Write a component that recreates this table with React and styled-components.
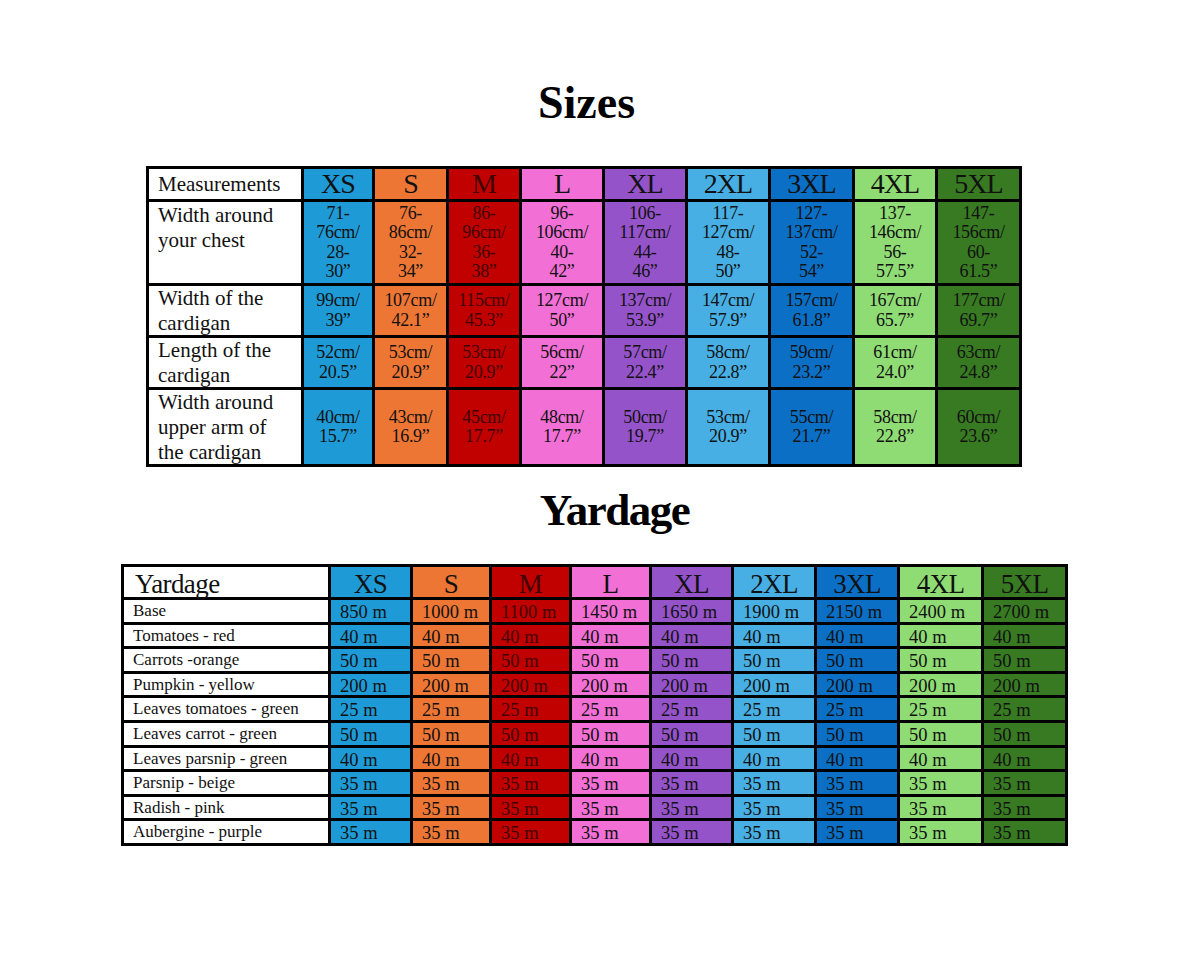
import React from "react";
import styled, { createGlobalStyle } from "styled-components";

const sizes = [
  { name: "XS", bg: "#1e9bd7", fg: "#111" },
  { name: "S", bg: "#ee7634", fg: "#111" },
  { name: "M", bg: "#c10000", fg: "#420000" },
  { name: "L", bg: "#f270d6", fg: "#111" },
  { name: "XL", bg: "#9553ca", fg: "#111" },
  { name: "2XL", bg: "#47afe4", fg: "#111" },
  { name: "3XL", bg: "#0b6fc5", fg: "#111" },
  { name: "4XL", bg: "#8fdb74", fg: "#111" },
  { name: "5XL", bg: "#377a22", fg: "#111" },
];

const measurements = [
  {
    label: "Width around\nyour chest",
    values: [
      "71-\n76cm/\n28-\n30”",
      "76-\n86cm/\n32-\n34”",
      "86-\n96cm/\n36-\n38”",
      "96-\n106cm/\n40-\n42”",
      "106-\n117cm/\n44-\n46”",
      "117-\n127cm/\n48-\n50”",
      "127-\n137cm/\n52-\n54”",
      "137-\n146cm/\n56-\n57.5”",
      "147-\n156cm/\n60-\n61.5”",
    ],
  },
  {
    label: "Width of the\ncardigan",
    values: [
      "99cm/\n39”",
      "107cm/\n42.1”",
      "115cm/\n45.3”",
      "127cm/\n50”",
      "137cm/\n53.9”",
      "147cm/\n57.9”",
      "157cm/\n61.8”",
      "167cm/\n65.7”",
      "177cm/\n69.7”",
    ],
  },
  {
    label: "Length of the\ncardigan",
    values: [
      "52cm/\n20.5”",
      "53cm/\n20.9”",
      "53cm/\n20.9”",
      "56cm/\n22”",
      "57cm/\n22.4”",
      "58cm/\n22.8”",
      "59cm/\n23.2”",
      "61cm/\n24.0”",
      "63cm/\n24.8”",
    ],
  },
  {
    label: "Width around\nupper arm of\nthe cardigan",
    values: [
      "40cm/\n15.7”",
      "43cm/\n16.9”",
      "45cm/\n17.7”",
      "48cm/\n17.7”",
      "50cm/\n19.7”",
      "53cm/\n20.9”",
      "55cm/\n21.7”",
      "58cm/\n22.8”",
      "60cm/\n23.6”",
    ],
  },
];

const same = (v) => Array(9).fill(v);

const yardage = [
  {
    label: "Base",
    values: ["850 m", "1000 m", "1100 m", "1450 m", "1650 m", "1900 m", "2150 m", "2400 m", "2700 m"],
  },
  { label: "Tomatoes - red", values: same("40 m") },
  { label: "Carrots -orange", values: same("50 m") },
  { label: "Pumpkin - yellow", values: same("200 m") },
  { label: "Leaves tomatoes - green", values: same("25 m") },
  { label: "Leaves carrot - green", values: same("50 m") },
  { label: "Leaves parsnip - green", values: same("40 m") },
  { label: "Parsnip - beige", values: same("35 m") },
  { label: "Radish - pink", values: same("35 m") },
  { label: "Aubergine - purple", values: same("35 m") },
];

const App = () => {
  return (
    <Page>
      <GlobalStyle />
      <Title $size={46} $spacing={0} $left={0} $right={27}>
        Sizes
      </Title>
      <SizesGrid>
        <HeadLabel>Measurements</HeadLabel>
        {sizes.map((s) => (
          <SizeHead key={s.name} $bg={s.bg} $fg={s.fg}>
            {s.name}
          </SizeHead>
        ))}
        {measurements.map((row, r) => (
          <React.Fragment key={row.label}>
            <RowLabel $pad={r === 0 ? 1 : 0}>{row.label}</RowLabel>
            {row.values.map((v, i) => (
              <SizeValue key={i} $bg={sizes[i].bg} $fg={sizes[i].fg}>
                {v}
              </SizeValue>
            ))}
          </React.Fragment>
        ))}
      </SizesGrid>

      <Title $size={45} $spacing={-1.5} $left={29} $right={0} $top={20}>
        Yardage
      </Title>
      <YardGrid>
        <YardHeadLabel>Yardage</YardHeadLabel>
        {sizes.map((s) => (
          <YardHead key={s.name} $bg={s.bg} $fg={s.fg}>
            {s.name}
          </YardHead>
        ))}
        {yardage.map((row) => (
          <React.Fragment key={row.label}>
            <YardLabel>{row.label}</YardLabel>
            {row.values.map((v, i) => (
              <YardValue key={i} $bg={sizes[i].bg} $fg={sizes[i].fg}>
                {v}
              </YardValue>
            ))}
          </React.Fragment>
        ))}
      </YardGrid>
    </Page>
  );
};
export default App;

const GlobalStyle = createGlobalStyle`
  body {
    margin: 0;
    background: #fff;
    font-family: "Liberation Serif", "Times New Roman", serif;
    color: #111;
  }
`;

const Page = styled.div`
  width: 1200px;
  height: 960px;
  padding-top: 80px;
  box-sizing: border-box;
  overflow: hidden;
`;

const Title = styled.h1`
  margin: ${({ $top }) => $top || 0}px 0 0;
  padding: 0 ${({ $right }) => $right}px 0 ${({ $left }) => $left}px;
  font-size: ${({ $size }) => $size}px;
  line-height: 46px;
  font-weight: bold;
  text-align: center;
  letter-spacing: ${({ $spacing }) => $spacing}px;
  color: #000;
`;

const SizesGrid = styled.div`
  display: grid;
  grid-template-columns: 152px 68px 71px 70px 80px 80px 80px 81px 80px 81px;
  grid-template-rows: 30px 81px 49px 49px 74px;
  gap: 3px;
  padding: 3px;
  background: #000;
  width: fit-content;
  margin: 40px 0 0 146px;
`;

const HeadLabel = styled.div`
  background: #fff;
  padding: 2px 9px 0;
  font-size: 21px;
  line-height: 26px;
`;

const SizeHead = styled.div`
  background: ${({ $bg }) => $bg};
  color: ${({ $fg }) => $fg};
  font-size: 28px;
  line-height: 30px;
  letter-spacing: -1px;
  text-align: center;
`;

const RowLabel = styled.div`
  background: #fff;
  padding: ${({ $pad }) => $pad}px 9px 0;
  font-size: 21px;
  line-height: 25px;
  white-space: pre-line;
`;

const SizeValue = styled.div`
  background: ${({ $bg }) => $bg};
  color: ${({ $fg }) => $fg};
  display: flex;
  align-items: center;
  justify-content: center;
  text-align: center;
  font-size: 18px;
  line-height: 19.5px;
  letter-spacing: -0.3px;
  white-space: pre-line;
`;

const YardGrid = styled.div`
  display: grid;
  grid-template-columns: 204px 79px 76px 77px 77px 79px 80px 80px 81px 81px;
  grid-template-rows: 30px repeat(10, 21.6px);
  gap: 3px;
  padding: 3px;
  background: #000;
  width: fit-content;
  margin: 31px 0 0 121px;
`;

const YardHeadLabel = styled.div`
  background: #fff;
  padding: 2px 11px 0;
  font-size: 27px;
  line-height: 30px;
  letter-spacing: -0.6px;
`;

const YardHead = styled.div`
  background: ${({ $bg }) => $bg};
  color: ${({ $fg }) => $fg};
  padding-top: 2px;
  font-size: 27px;
  line-height: 30px;
  letter-spacing: -0.6px;
  text-align: center;
`;

const YardLabel = styled.div`
  background: #fff;
  padding: 0 9px;
  font-size: 17px;
  line-height: 21.6px;
  white-space: nowrap;
`;

const YardValue = styled.div`
  background: ${({ $bg }) => $bg};
  color: ${({ $fg }) => $fg};
  padding: 2px 0 0 9px;
  font-size: 18.5px;
  line-height: 21.6px;
  white-space: nowrap;
`;
